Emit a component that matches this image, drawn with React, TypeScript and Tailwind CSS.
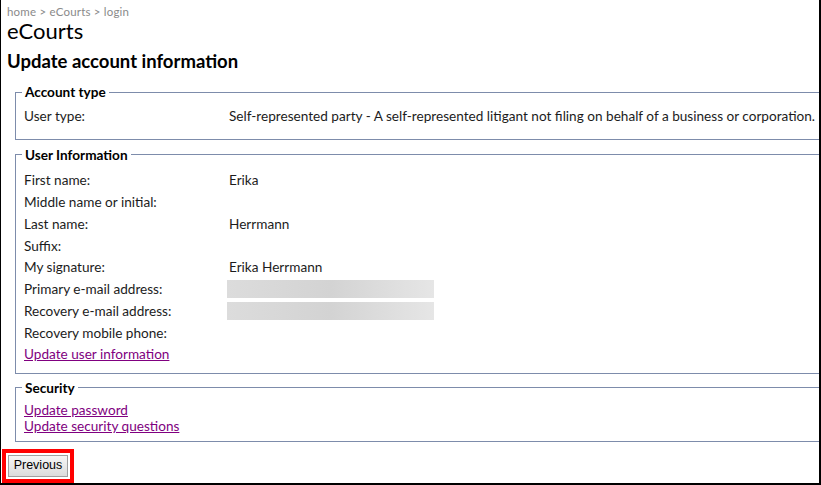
import React from "react";

const font = { fontFamily: "Lato, 'Noto Sans', sans-serif" };

function Row({ label, value, blur }: { label: string; value?: string; blur?: boolean }) {
  return (
    <div className="flex h-[21.75px] items-center">
      <div className="w-[205px] shrink-0">{label}</div>
      {blur ? (
        <div className="h-[18px] w-[207px] -ml-[2px] bg-gradient-to-r from-[#dcdcdc] via-[#d3d3d3] to-[#e6e6e6]" />
      ) : (
        <div className="whitespace-nowrap">{value}</div>
      )}
    </div>
  );
}

export default function App() {
  return (
    <div
      className="relative w-[821px] h-[485px] overflow-hidden bg-white border-l border-r-2 border-b-2 border-black text-[13.6px] text-[#1c1c1c]"
      style={font}
    >
      <div className="pl-[6px] pt-[5px] text-[11.5px] leading-[14px] tracking-[0.2px] text-[#8a8a8a]">home &gt; eCourts &gt; login</div>
      <h1 className="pl-[6px] text-[22px] leading-[24px] font-normal text-black">eCourts</h1>
      <h2 className="pl-[6px] mt-[7px] text-[18.5px] leading-[22px] font-bold text-black">Update account information</h2>

      <fieldset className="ml-[14px] mt-[12px] w-[840px] border border-[#7d8cab] pl-[8px] pt-[5px] pb-[12px]">
        <legend className="ml-[-2px] px-[3px] font-bold leading-[16px] text-black">Account type</legend>
        <Row label="User type:" value="Self-represented party - A self-represented litigant not filing on behalf of a business or corporation." />
      </fieldset>

      <fieldset className="ml-[14px] mt-[7px] w-[840px] border border-[#7d8cab] pl-[8px] pt-[7px] pb-[7px]">
        <legend className="ml-[-2px] px-[3px] font-bold leading-[16px] text-black">User Information</legend>
        <Row label="First name:" value="Erika" />
        <Row label="Middle name or initial:" />
        <Row label="Last name:" value="Herrmann" />
        <Row label="Suffix:" />
        <Row label="My signature:" value="Erika Herrmann" />
        <Row label="Primary e-mail address:" blur />
        <Row label="Recovery e-mail address:" blur />
        <Row label="Recovery mobile phone:" />
        <div className="flex h-[21.75px] items-center">
          <a href="#" className="text-[#800080] underline">Update user information</a>
        </div>
      </fieldset>

      <fieldset className="ml-[14px] mt-[6px] w-[840px] border border-[#7d8cab] pl-[8px] pt-[6px] pb-[7px]">
        <legend className="ml-[-2px] px-[3px] font-bold leading-[16px] text-black">Security</legend>
        <div className="flex flex-col leading-[16px]">
          <a href="#" className="text-[#800080] underline">Update password</a>
          <a href="#" className="text-[#800080] underline">Update security questions</a>
        </div>
      </fieldset>

      <div className="mt-[7px] ml-[1px] inline-flex border-4 border-[#ff0000] p-[2px]">
        <button
          className="h-[22px] w-[60px] border border-[#a0a0a0] bg-gradient-to-b from-[#f6f6f6] to-[#dcdcdc] text-[12.5px] text-black"
          style={{ fontFamily: "'Liberation Sans', Arial, sans-serif" }}
        >
          Previous
        </button>
      </div>
    </div>
  );
}
